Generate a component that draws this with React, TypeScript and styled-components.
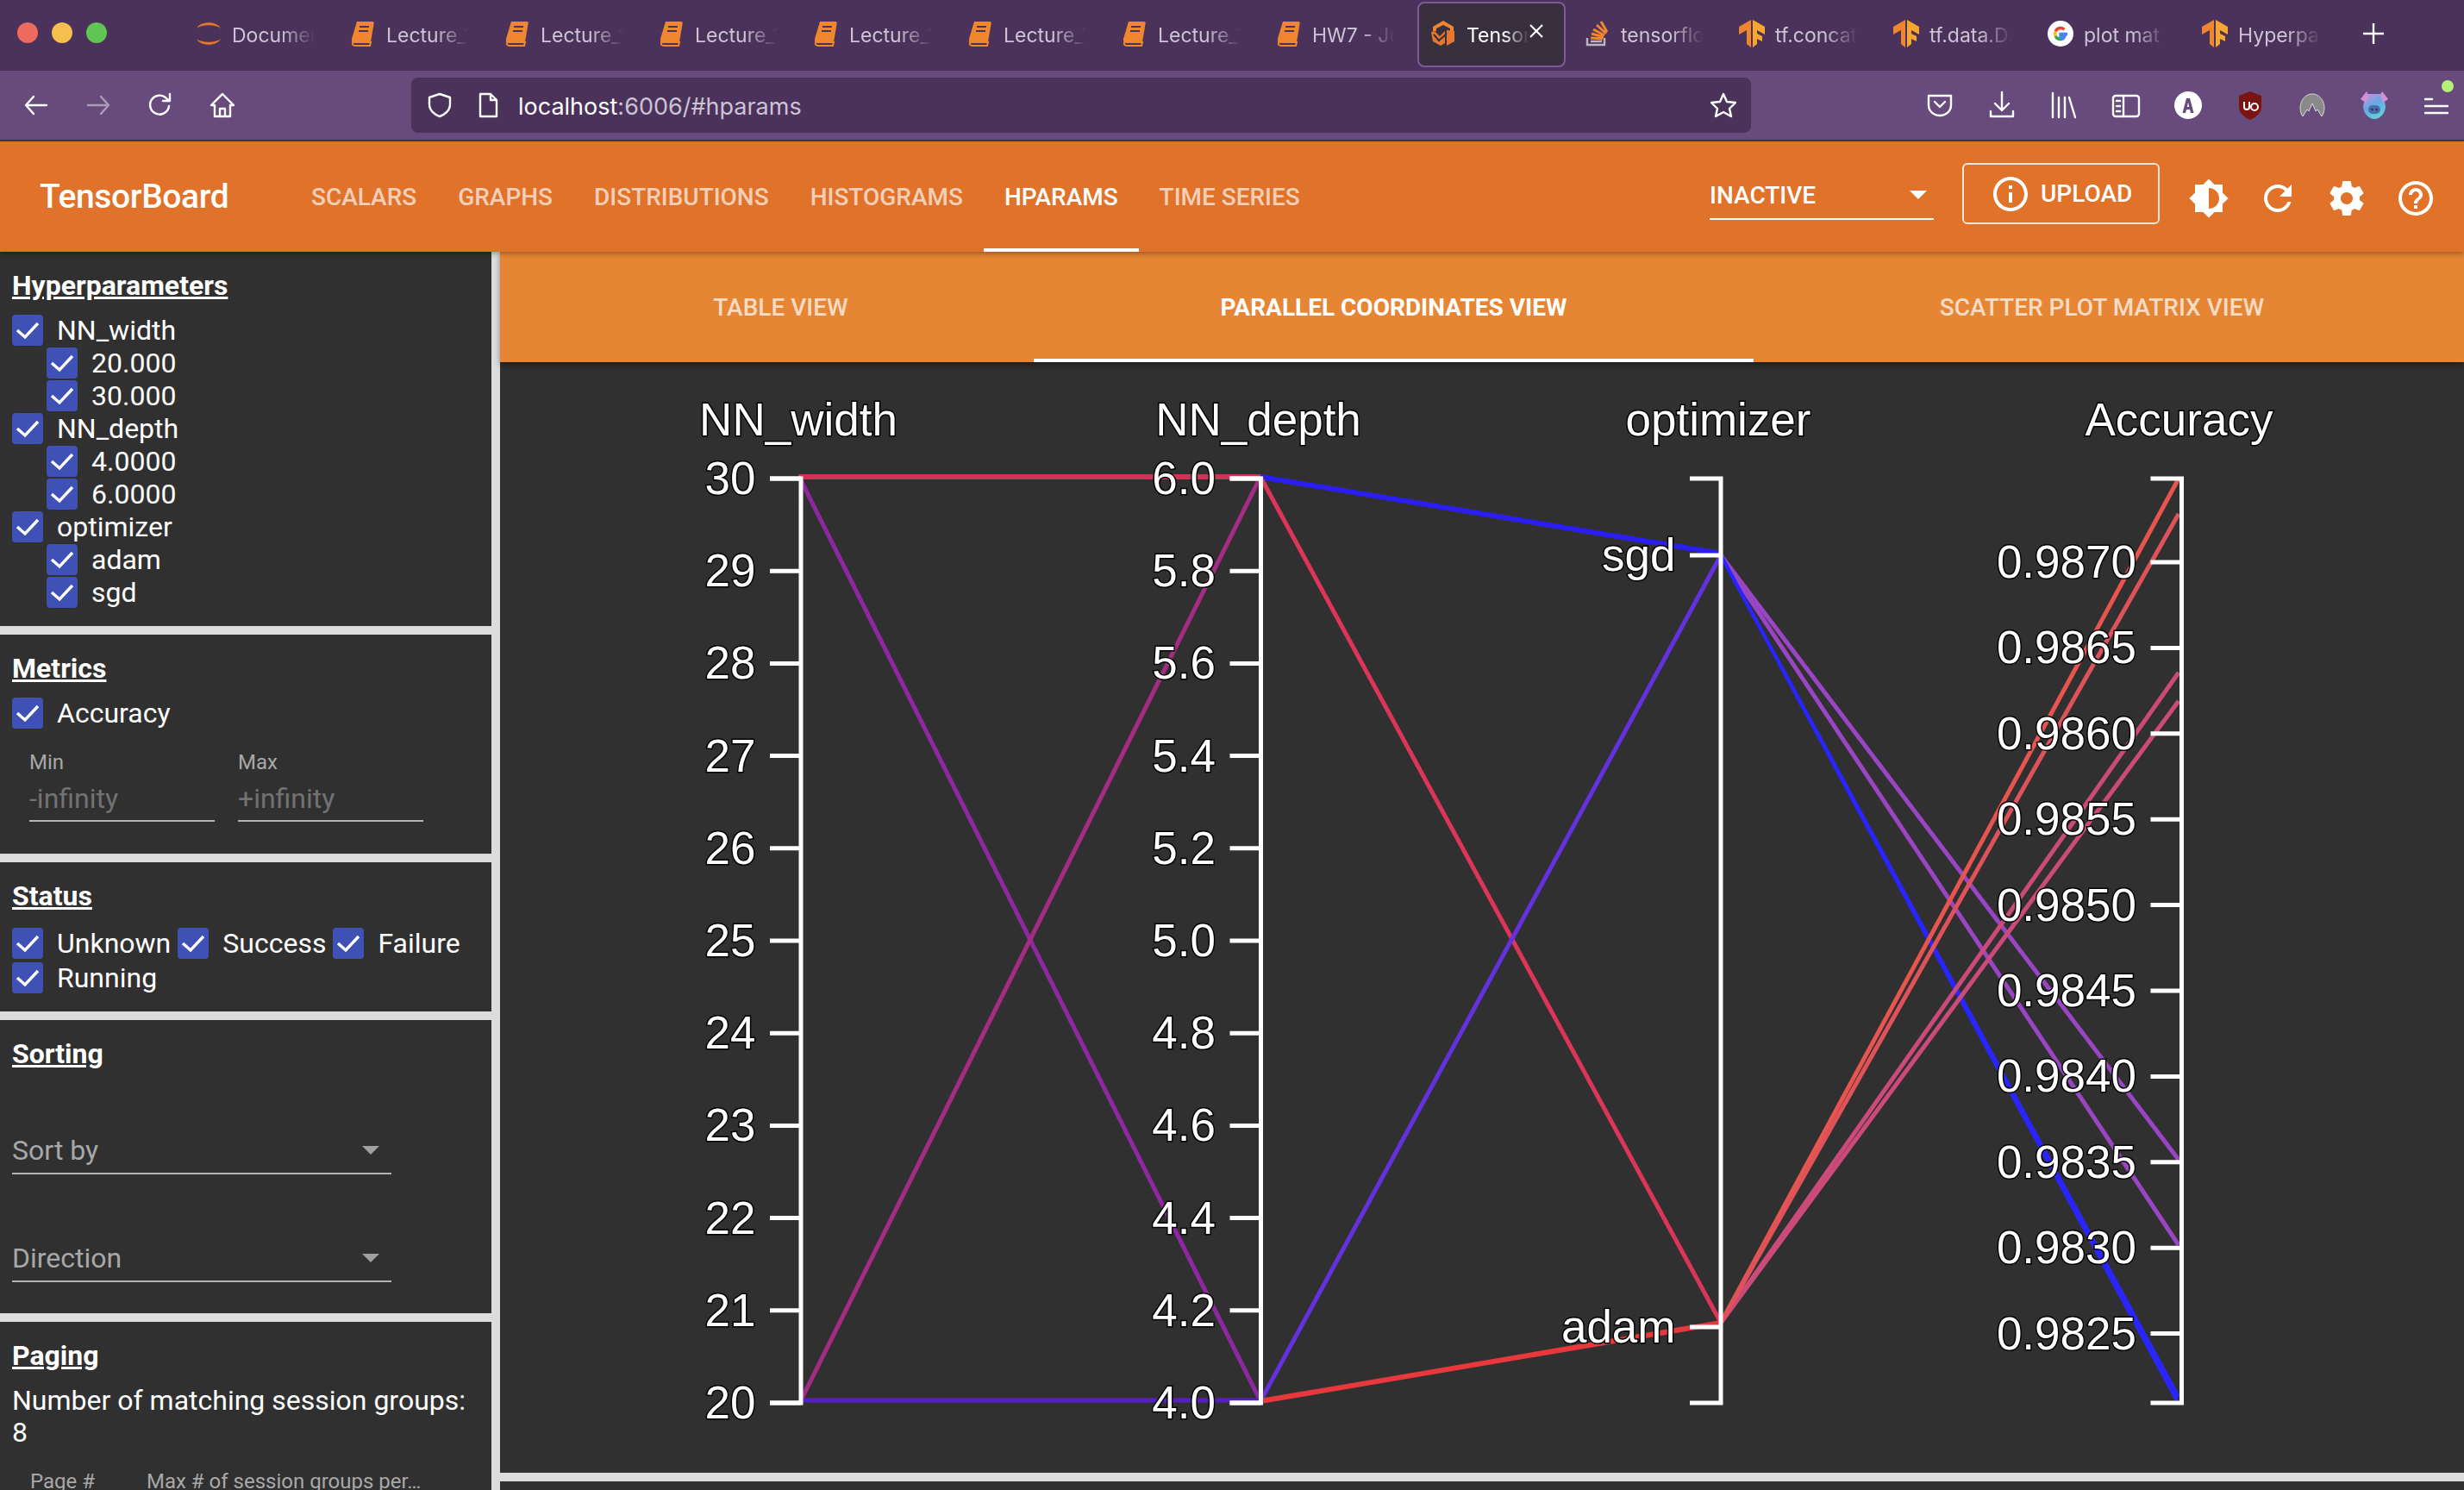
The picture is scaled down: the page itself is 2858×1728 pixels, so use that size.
import React from 'react';
import styled, { createGlobalStyle } from 'styled-components';

const GlobalStyle = createGlobalStyle`
  html, body { margin: 0; padding: 0; background: #303030; }
  * { box-sizing: border-box; }
`;

const Shell = styled.div`
  width: 2858px;
  height: 1728px;
  overflow: hidden;
  display: flex;
  flex-direction: column;
  font-family: Roboto, "Liberation Sans", sans-serif;
  color: #fff;
`;

/* browser chrome */
const TabBar = styled.div`
  height: 82px;
  flex: none;
  display: flex;
  align-items: center;
  background: #4a325a;
  font-family: Inter, "Liberation Sans", sans-serif;
`;
const Lights = styled.div`
  width: 222px;
  flex: none;
  display: flex;
  gap: 16px;
  padding-left: 20px;
  margin-top: -6px;
`;
const Light = styled.span<{ $c: string }>`
  width: 24px;
  height: 24px;
  border-radius: 50%;
  background: ${(p) => p.$c};
`;
const BrowserTab = styled.div<{ $active?: boolean }>`
  width: 179px;
  flex: none;
  height: 82px;
  position: relative;
  display: flex;
  align-items: center;
  padding-left: 5px;
  ${(p) =>
    p.$active &&
    `&::before {
      content: '';
      position: absolute;
      left: -10px;
      top: 2px;
      width: 168px;
      height: 72px;
      background: #38303f;
      border: 2px solid #7b5a9e;
      border-radius: 8px;
    }`}
`;
const TabIcon = styled.svg`
  width: 30px;
  height: 32px;
  flex: none;
  position: relative;
  margin-top: -4px;
`;
const TabLabel = styled.span<{ $active?: boolean; $w?: number }>`
  position: relative;
  margin-left: 12px;
  width: ${(p) => p.$w ?? 96}px;
  white-space: nowrap;
  font-size: 23px;
  line-height: 30px;
  color: ${(p) => (p.$active ? '#fff' : '#cdc3d6')};
  mask-image: linear-gradient(to right, #000 60%, transparent 100%);
`;
const CloseX = styled.svg`
  position: absolute;
  left: 118px;
  top: 26px;
  width: 20px;
  height: 20px;
`;
const PlusIcon = styled.svg`
  width: 26px;
  height: 26px;
  margin-left: 12px;
  margin-top: -4px;
`;

const Toolbar = styled.div`
  height: 82px;
  flex: none;
  display: flex;
  align-items: center;
  background: #674b7c;
  border-bottom: 2px solid #4a325a;
  padding-left: 6px;
`;
const ToolButton = styled.div<{ $dim?: boolean }>`
  width: 72px;
  height: 60px;
  flex: none;
  display: flex;
  align-items: center;
  justify-content: center;
  position: relative;
  opacity: ${(p) => (p.$dim ? 0.45 : 1)};
  svg { width: 34px; height: 34px; }
`;
const UrlBar = styled.div`
  width: 1554px;
  height: 64px;
  flex: none;
  margin-left: 183px;
  background: #4a325a;
  border-radius: 8px;
  display: flex;
  align-items: center;
  padding-left: 18px;
  font-family: Inter, "Liberation Sans", sans-serif;
  font-size: 27px;
  color: #cdc3d6;
  svg { width: 30px; height: 30px; flex: none; }
`;
const UrlText = styled.span`
  margin-left: 20px;
  padding-top: 2px;
  flex: 1;
  b { font-weight: 400; color: #fff; }
`;
const StarWrap = styled.span`
  display: flex;
  margin-right: 17px;
`;
const ToolGroup = styled.div`
  display: flex;
  margin-left: auto;
  margin-right: -4px;
`;
const Badge = styled.span`
  position: absolute;
  right: 16px;
  top: 1px;
  width: 14px;
  height: 14px;
  border-radius: 50%;
  background: #b5f07a;
`;

/* tensorboard header */
const Header = styled.header`
  height: 128px;
  flex: none;
  display: flex;
  align-items: center;
  background: #e0722a;
  padding-left: 46px;
  position: relative;
  z-index: 2;
  box-shadow: 0 2px 6px rgba(0, 0, 0, 0.35);
`;
const Brand = styled.div`
  width: 291px;
  flex: none;
  font-size: 39px;
  font-weight: 500;
  letter-spacing: -0.4px;
`;
const Nav = styled.nav`
  display: flex;
  height: 100%;
`;
const NavTab = styled.div<{ $active?: boolean }>`
  height: 100%;
  padding: 4px 24px 0;
  display: flex;
  align-items: center;
  font-size: 28px;
  font-weight: 500;
  letter-spacing: -0.02px;
  color: ${(p) => (p.$active ? '#fff' : 'rgba(255,255,255,0.68)')};
  border-bottom: 4px solid ${(p) => (p.$active ? '#fff' : 'transparent')};
`;
const RunSelect = styled.div`
  width: 260px;
  height: 58px;
  margin-left: auto;
  margin-top: -5px;
  display: flex;
  align-items: center;
  justify-content: space-between;
  padding: 3px 8px 0 0;
  border-bottom: 2px solid #fff;
  font-size: 28px;
  font-weight: 500;
`;
const Caret = styled.span<{ $c?: string; $w?: number }>`
  width: 0;
  height: 0;
  border-left: ${(p) => p.$w ?? 10}px solid transparent;
  border-right: ${(p) => p.$w ?? 10}px solid transparent;
  border-top: ${(p) => p.$w ?? 10}px solid ${(p) => p.$c ?? '#fff'};
`;
const UploadButton = styled.div`
  width: 229px;
  height: 71px;
  margin-left: 33px;
  margin-top: -7px;
  border: 2px solid #f4e6da;
  border-radius: 6px;
  display: flex;
  align-items: center;
  padding-left: 30px;
  gap: 11px;
  font-size: 28px;
  font-weight: 500;
  svg { width: 48px; height: 48px; fill: #fff; }
`;
const HeaderIcons = styled.div`
  display: flex;
  margin-left: 17px;
  margin-right: 16px;
  margin-top: 4px;
`;
const HeaderIcon = styled.svg`
  width: 80px;
  height: 48px;
  fill: #fff;
`;

const Body = styled.div`
  flex: 1;
  min-height: 0;
  display: flex;
`;

/* sidebar */
const Sidebar = styled.aside`
  width: 580px;
  flex: none;
  border-right: 10px solid #dcdcdc;
  display: flex;
  flex-direction: column;
  gap: 10px;
  background: #dcdcdc;
`;
const Section = styled.section<{ $h: number }>`
  flex: none;
  height: ${(p) => p.$h}px;
  background: #303030;
  padding: 20px 14px 0;
  overflow: hidden;
`;
const Heading = styled.h4`
  margin: 0 0 14px;
  font-size: 32px;
  line-height: 38px;
  font-weight: 700;
  text-decoration: underline;
`;
const Row = styled.div<{ $nested?: boolean }>`
  height: 38px;
  display: flex;
  align-items: center;
  padding-left: ${(p) => (p.$nested ? 40 : 0)}px;
`;
const Box = styled.span`
  width: 36px;
  height: 36px;
  flex: none;
  border-radius: 4px;
  background: #3f51b5;
  display: flex;
  align-items: center;
  justify-content: center;
  svg { width: 28px; height: 24px; }
`;
const CheckLabel = styled.span`
  margin-left: 16px;
  font-size: 32px;
  line-height: 38px;
  white-space: nowrap;
`;
const StatusWrap = styled.div`
  display: flex;
  flex-wrap: wrap;
  row-gap: 2px;
  padding-top: 3px;
`;
const StatusItem = styled.div`
  display: flex;
  align-items: center;
  height: 38px;
  margin-right: 8px;
`;
const MinMax = styled.div`
  display: flex;
  gap: 27px;
  padding-left: 20px;
  margin-top: 19px;
`;
const FieldCol = styled.div`
  width: 215px;
`;
const FieldLabel = styled.div`
  font-size: 24px;
  line-height: 38px;
  color: #a8a8a8;
`;
const FieldValue = styled.div`
  font-size: 32px;
  line-height: 46px;
  height: 50px;
  color: #727272;
  border-bottom: 2px solid #b4b4b4;
`;
const SelectField = styled.div<{ $first?: boolean }>`
  width: 440px;
  height: 56px;
  margin-top: ${(p) => (p.$first ? 65 : 69)}px;
  display: flex;
  align-items: center;
  justify-content: space-between;
  padding: 2px 14px 0 0;
  font-size: 32px;
  color: #a8a8a8;
  border-bottom: 2px solid #b4b4b4;
`;
const PagingText = styled.div`
  padding-top: 1px;
  font-size: 32px;
  line-height: 37px;
`;
const PagingCols = styled.div`
  display: flex;
  padding-left: 21px;
  margin-top: 19px;
  font-size: 24px;
  line-height: 38px;
  color: #a8a8a8;
  span:first-child { width: 135px; }
`;

/* main */
const Main = styled.main`
  flex: 1;
  min-width: 0;
  display: flex;
  flex-direction: column;
  background: #303030;
`;
const SubTabs = styled.div`
  height: 128px;
  flex: none;
  display: flex;
  background: #e68534;
  position: relative;
  box-shadow: 0 3px 6px rgba(0, 0, 0, 0.4);
`;
const SubTab = styled.div<{ $w: number; $active?: boolean; $pl?: number; $pr?: number }>`
  width: ${(p) => p.$w}px;
  flex: none;
  display: flex;
  align-items: center;
  justify-content: center;
  padding: 4px ${(p) => p.$pr ?? 0}px 0 ${(p) => p.$pl ?? 0}px;
  font-size: 28px;
  font-weight: ${(p) => (p.$active ? 700 : 500)};
  color: ${(p) => (p.$active ? '#fff' : 'rgba(255,255,255,0.72)')};
  border-bottom: 4px solid ${(p) => (p.$active ? '#fff' : 'transparent')};
`;
const Plot = styled.svg`
  width: 2278px;
  height: 1288px;
  flex: none;
  display: block;
`;
const PlotText = styled.text`
  font-family: "Liberation Sans", Arial, sans-serif;
  font-size: 53px;
  fill: #fff;
  stroke: #000;
  stroke-width: 3px;
  paint-order: stroke;
`;
const Divider = styled.div`
  height: 10px;
  flex: none;
  background: #dcdcdc;
`;

const Check = () => (
  <svg viewBox="0 0 28 24" fill="none" stroke="#fff" strokeWidth="3.4">
    <path d="M2 12l9 8L26 4" />
  </svg>
);

const CheckRow = ({ label, nested }: { label: string; nested?: boolean }) => (
  <Row $nested={nested}>
    <Box><Check /></Box>
    <CheckLabel>{label}</CheckLabel>
  </Row>
);

const BookIcon = () => (
  <TabIcon viewBox="0 0 30 32">
    <path d="M8 2h18c1.500 0 2 1 1.600 2.400L24 26H5c-2.500 0-3.600-1.600-3-4z" fill="#f0872f" />
    <path d="M3 26c-.8 2.600.5 4 3 4h17l1-4z" fill="none" stroke="#f0872f" strokeWidth="2" />
    <path d="M11 8h11M10 13h11" stroke="#4a325a" strokeWidth="2" />
  </TabIcon>
);
const RingIcon = () => (
  <TabIcon viewBox="0 0 30 32">
    <path d="M1 10C5 1 25 1 29 10C23 5 7 5 1 10z" fill="#e8762c" />
    <path d="M1 22C5 31 25 31 29 22C23 27 7 27 1 22z" fill="#e8762c" />
  </TabIcon>
);
const TfIcon = () => (
  <TabIcon viewBox="0 0 30 32">
    <path d="M14 0L0 8v9l9-5v16l5 4z" fill="#ee8630" />
    <path d="M16 0l14 8v9l-9-5v4l6 3v6l-6-3v6l-5 4z" fill="#f7a62f" />
  </TabIcon>
);
const StackIcon = () => (
  <TabIcon viewBox="0 0 30 32">
    <path d="M3 21v8h20v-8" fill="none" stroke="#bcb6c2" strokeWidth="2.400" />
    <path d="M7 25h13" stroke="#bcb6c2" strokeWidth="2.400" />
    <path d="M7 21l14 1M8 16l14 4M10 11l13 7M14 6l11 10M19 2l7 12" stroke="#f0872f" strokeWidth="3" fill="none" />
  </TabIcon>
);
const GoogleIcon = () => (
  <TabIcon viewBox="0 0 30 32">
    <circle cx="15" cy="16" r="15" fill="#fff" />
    <path d="M23 16.500h-8v3h4.600c-.8 2-2.500 3-4.600 3" fill="none" stroke="#4a85ef" strokeWidth="3.400" />
    <path d="M15 22.500c-2.600 0-4.800-1.500-5.800-3.800" fill="none" stroke="#34a853" strokeWidth="3.400" />
    <path d="M9.200 18.700a7 7 0 0 1 0-5.400" fill="none" stroke="#fbbc05" strokeWidth="3.400" />
    <path d="M9.200 13.300C10.200 11 12.400 9.500 15 9.500c1.700 0 3.200.6 4.400 1.700" fill="none" stroke="#ea4335" strokeWidth="3.400" />
  </TabIcon>
);
const BoardIcon = () => (
  <TabIcon viewBox="0 0 30 32">
    <path d="M15 1l12 7v5h-4V10l-8-4-8 4v3H3V8z" fill="#f0872f" />
    <path d="M1 14l4-1 6 6 6-6v14l-5 3-9-5zM19 12l9 1v12l-9 5z" fill="#e8762c" />
    <path d="M4 17l6 7 9-8" stroke="#38303f" strokeWidth="2" fill="none" />
  </TabIcon>
);

type TabDef = { icon: React.ReactNode; label: string; active?: boolean };
const lecture = (): TabDef => ({ icon: <BookIcon />, label: 'Lecture_1' });
const tabs: TabDef[] = [
  { icon: <RingIcon />, label: 'Documen' },
  lecture(), lecture(), lecture(), lecture(), lecture(), lecture(),
  { icon: <BookIcon />, label: 'HW7 - Ju' },
  { icon: <BoardIcon />, label: 'Tensor', active: true },
  { icon: <StackIcon />, label: 'tensorflo' },
  { icon: <TfIcon />, label: 'tf.concat' },
  { icon: <TfIcon />, label: 'tf.data.Da' },
  { icon: <GoogleIcon />, label: 'plot mat' },
  { icon: <TfIcon />, label: 'Hyperpa' },
];

const navItems = ['SCALARS', 'GRAPHS', 'DISTRIBUTIONS', 'HISTOGRAMS', 'HPARAMS', 'TIME SERIES'];

const line = { fill: 'none', stroke: '#fff', strokeWidth: 2.4, strokeLinecap: 'round', strokeLinejoin: 'round' } as const;

const ToolIcons = [
  <svg key="pocket" viewBox="0 0 34 34" {...line}><path d="M4 6h26v11c0 7-6 12-13 12S4 24 4 17z" /><path d="M11 13l6 6 6-6" /></svg>,
  <svg key="dl" viewBox="0 0 34 34" {...line}><path d="M17 2v21M9 15l8 8 8-8M4 24v6h26v-6" /></svg>,
  <svg key="lib" viewBox="0 0 34 34" {...line}><path d="M4 3v28M11 8v23M18 8v23M23 8l7 23" /></svg>,
  <svg key="side" viewBox="0 0 34 34" {...line}><rect x="2" y="6" width="30" height="24" rx="3" /><path d="M14 6v24M6 12h4M6 18h4M6 24h4" /></svg>,
  <svg key="a" viewBox="0 0 34 34"><circle cx="17" cy="17" r="16" fill="#fff" /><path d="M10.500 26L15 9h4l4.500 17h-3.500l-1-4h-4l-1 4zM15.800 19h2.400L17 13.500z" fill="#674b7c" /></svg>,
  <svg key="ub" viewBox="0 0 34 34"><path d="M17 1l13 5v13c0 7-6 12-13 15C10 31 4 26 4 19V6z" fill="#7b1410" /><path d="M10 13v6a3 3 0 0 0 6 0v-6M18 19a4 4 0 1 0 8 0 4 4 0 1 0-8 0" fill="none" stroke="#fff" strokeWidth="2" /></svg>,
  <svg key="nord" viewBox="0 0 34 34"><path d="M6 30C-1 20 5 4 17 4s18 16 11 26l-5-8-2 2-4-9-4 9-2-2z" fill="#8a8a8a" stroke="#d8d8d8" strokeWidth="1" /></svg>,
  <svg key="pig" viewBox="0 0 34 34">
    <defs>
      <linearGradient id="pigBody" x1="0" y1="0" x2="0.6" y2="1">
        <stop offset="0" stopColor="#d58fd8" />
        <stop offset="0.5" stopColor="#6aa6e8" />
        <stop offset="1" stopColor="#5fd0d8" />
      </linearGradient>
    </defs>
    <path d="M9 4h16l3 6 2 8c0 8-6 15-13 15S4 26 4 18l2-8z" fill="url(#pigBody)" />
    <path d="M8 1L1 10l6 4 3-9zM26 1l7 9-6 4-3-9z" fill="#d58fd8" />
    <rect x="10" y="17" width="14" height="10" rx="5" fill="#4a6fa8" />
    <circle cx="14.500" cy="22" r="1.500" fill="#2d3f66" />
    <circle cx="19.500" cy="22" r="1.500" fill="#2d3f66" />
  </svg>,
  <svg key="menu" viewBox="0 0 34 34" {...line}><path d="M4 10h8M4 18h26M4 26h26" /></svg>,
];

const Back = () => (<svg viewBox="0 0 34 34" {...line}><path d="M29 17H5M14 7L5 17l9 10" /></svg>);
const Forward = () => (<svg viewBox="0 0 34 34" {...line}><path d="M5 17h24M20 7l9 10-9 10" /></svg>);
const Reload = () => (<svg viewBox="0 0 34 34" {...line}><path d="M27 18a11 11 0 1 1-3-9l3 3M28 4v8h-8" /></svg>);
const Home = () => (<svg viewBox="0 0 34 34" {...line}><path d="M17 4L4 17h4v13h18V17h4zM14 30v-9h6v9" /></svg>);

/* chart data, in page coordinates */
const segments: [number, number, number, number, string, number][] = [
  [926, 553, 1462, 553, '#cf3358', 6],
  [929, 557, 1462, 1625, '#8f28a0', 5],
  [929, 1624, 1462, 553, '#a52c84', 5],
  [929, 1624, 1462, 1624, '#5a1ec8', 5],
  [1462, 553, 1996, 642, '#2a1ff0', 6],
  [1462, 553, 1996, 1534, '#dc3558', 5],
  [1462, 1625, 1996, 644, '#6430e0', 5],
  [1462, 1625, 1996, 1534, '#e8383c', 6],
  [1996, 644, 2527, 1345, '#9a45c4', 5],
  [1996, 644, 2527, 1444, '#9a45c4', 5],
  [1996, 644, 2527, 1628, '#2a25ff', 4],
  [1996, 644, 2527, 1620, '#2a25ff', 4],
  [1996, 1534, 2527, 780, '#cc4a7a', 5],
  [1996, 1534, 2527, 813, '#cc4a7a', 5],
  [1996, 1534, 2527, 555, '#e8544e', 5],
  [1996, 1534, 2527, 596, '#e0525a', 5],
];

type AxisDef = { x: number; title: string; ticks: [string, number][] };
const linear = (labels: string[]): [string, number][] =>
  labels.map((l, i) => [l, 555 + i * 107.2]);
const axes: AxisDef[] = [
  { x: 929, title: 'NN_width', ticks: linear(['30', '29', '28', '27', '26', '25', '24', '23', '22', '21', '20']) },
  { x: 1462.5, title: 'NN_depth', ticks: linear(['6.0', '5.8', '5.6', '5.4', '5.2', '5.0', '4.8', '4.6', '4.4', '4.2', '4.0']) },
  { x: 1996, title: 'optimizer', ticks: [['sgd', 644], ['adam', 1539]] },
  {
    x: 2530.5,
    title: 'Accuracy',
    ticks: ['0.9870', '0.9865', '0.9860', '0.9855', '0.9850', '0.9845', '0.9840', '0.9835', '0.9830', '0.9825'].map(
      (l, i) => [l, 652 + i * 99.4] as [string, number],
    ),
  },
];

const Chart = () => (
  <Plot viewBox="580 420 2278 1288">
    {segments.map(([x1, y1, x2, y2, c, w], i) => (
      <line key={i} x1={x1} y1={y1} x2={x2} y2={y2} stroke={c} strokeWidth={w} />
    ))}
    {axes.map((a) => (
      <g key={a.title}>
        <path d={`M${a.x - 36} 555H${a.x}V1627H${a.x - 36}`} fill="none" stroke="#fff" strokeWidth="5" />
        {a.ticks.map(([l, y]) => (
          <g key={l}>
            <line x1={a.x - 36} x2={a.x} y1={y} y2={y} stroke="#fff" strokeWidth="5" />
            <PlotText x={a.x - 52.5} y={y + 18} textAnchor="end">{l}</PlotText>
          </g>
        ))}
        <PlotText x={a.x - 3} y={505} textAnchor="middle">{a.title}</PlotText>
      </g>
    ))}
  </Plot>
);

export default function App() {
  return (
    <Shell>
      <GlobalStyle />
      <TabBar>
        <Lights>
          <Light $c="#ec6a5e" />
          <Light $c="#f4bf4f" />
          <Light $c="#61c554" />
        </Lights>
        {tabs.map((t, i) => (
          <BrowserTab key={i} $active={t.active}>
            {t.icon}
            <TabLabel $active={t.active} $w={t.active ? 72 : undefined}>{t.label}</TabLabel>
            {t.active && (
              <CloseX viewBox="0 0 20 20" stroke="#fff" strokeWidth="2"><path d="M3 3l14 14M17 3L3 17" /></CloseX>
            )}
          </BrowserTab>
        ))}
        <PlusIcon viewBox="0 0 26 26" stroke="#fff" strokeWidth="2.400"><path d="M13 1v24M1 13h24" /></PlusIcon>
      </TabBar>

      <Toolbar>
        <ToolButton><Back /></ToolButton>
        <ToolButton $dim><Forward /></ToolButton>
        <ToolButton><Reload /></ToolButton>
        <ToolButton><Home /></ToolButton>
        <UrlBar>
          <svg viewBox="0 0 30 30" {...line}><path d="M15 2l12 4v8c0 7-6 12-12 14C9 26 3 21 3 14V6z" /></svg>
          <svg viewBox="0 0 30 30" {...line} style={{ marginLeft: 26 }}><path d="M6 2h12l7 7v19H6zM18 2v7h7" /></svg>
          <UrlText><b>localhost</b>:6006/#hparams</UrlText>
          <StarWrap>
            <svg viewBox="0 0 30 30" {...line}><path d="M15 2l4 9 10 1-7 7 2 9-9-5-9 5 2-9-7-7 10-1z" /></svg>
          </StarWrap>
        </UrlBar>
        <ToolGroup>
          {ToolIcons.map((icon, i) => (
            <ToolButton key={i}>
              {icon}
              {i === ToolIcons.length - 1 && <Badge />}
            </ToolButton>
          ))}
        </ToolGroup>
      </Toolbar>

      <Header>
        <Brand>TensorBoard</Brand>
        <Nav>
          {navItems.map((n) => (
            <NavTab key={n} $active={n === 'HPARAMS'}>{n}</NavTab>
          ))}
        </Nav>
        <RunSelect>INACTIVE<Caret /></RunSelect>
        <UploadButton>
          <svg viewBox="0 0 24 24"><path d="M11 7h2v2h-2zm0 4h2v6h-2zm1-9C6.480 2 2 6.480 2 12s4.480 10 10 10 10-4.480 10-10S17.520 2 12 2zm0 18c-4.410 0-8-3.590-8-8s3.590-8 8-8 8 3.590 8 8-3.590 8-8 8z" /></svg>
          UPLOAD
        </UploadButton>
        <HeaderIcons>
          <HeaderIcon viewBox="-8 0 40 24"><path fillRule="evenodd" d="M20 15.310L23.310 12 20 8.690V4h-4.690L12 .69 8.690 4H4v4.690L.69 12 4 15.310V20h4.690L12 23.310 15.310 20H20v-4.690zM12 18V6c3.310 0 6 2.690 6 6s-2.690 6-6 6z" /></HeaderIcon>
          <HeaderIcon viewBox="-8 0 40 24"><path d="M17.650 6.350C16.200 4.900 14.210 4 12 4c-4.420 0-7.990 3.580-7.990 8s3.570 8 7.990 8c3.730 0 6.840-2.550 7.730-6h-2.080c-.82 2.330-3.040 4-5.650 4-3.310 0-6-2.690-6-6s2.690-6 6-6c1.660 0 3.140.69 4.220 1.780L13 11h7V4l-2.350 2.350z" /></HeaderIcon>
          <HeaderIcon viewBox="-8 0 40 24"><path d="M19.430 12.980c.04-.32.07-.64.07-.98s-.03-.66-.07-.98l2.110-1.650c.19-.15.24-.42.12-.64l-2-3.460c-.12-.22-.39-.3-.61-.22l-2.490 1c-.52-.4-1.080-.73-1.690-.98l-.38-2.650C14.460 2.180 14.250 2 14 2h-4c-.25 0-.46.18-.49.42l-.38 2.650c-.61.25-1.170.59-1.690.98l-2.490-1c-.23-.09-.49 0-.61.22l-2 3.460c-.13.22-.07.49.12.64l2.110 1.650c-.04.32-.07.65-.07.98s.03.66.07.98l-2.110 1.650c-.19.15-.24.42-.12.64l2 3.460c.12.22.39.3.61.22l2.490-1c.52.4 1.080.73 1.690.98l.38 2.650c.03.24.24.42.49.42h4c.25 0 .46-.18.49-.42l.38-2.650c.61-.25 1.170-.59 1.690-.98l2.490 1c.23.09.49 0 .61-.22l2-3.460c.12-.22.07-.49-.12-.64l-2.110-1.650zM12 15.500c-1.930 0-3.500-1.570-3.500-3.500s1.570-3.500 3.500-3.500 3.500 1.570 3.500 3.500-1.570 3.500-3.500 3.500z" /></HeaderIcon>
          <HeaderIcon viewBox="-8 0 40 24"><path d="M11 18h2v-2h-2v2zm1-16C6.480 2 2 6.480 2 12s4.480 10 10 10 10-4.480 10-10S17.520 2 12 2zm0 18c-4.410 0-8-3.590-8-8s3.590-8 8-8 8 3.590 8 8-3.590 8-8 8zm0-14c-2.210 0-4 1.790-4 4h2c0-1.100.9-2 2-2s2 .9 2 2c0 2-3 1.750-3 5h2c0-2.250 3-2.500 3-5 0-2.210-1.790-4-4-4z" /></HeaderIcon>
        </HeaderIcons>
      </Header>

      <Body>
        <Sidebar>
          <Section $h={434}>
            <Heading>Hyperparameters</Heading>
            <CheckRow label="NN_width" />
            <CheckRow nested label="20.000" />
            <CheckRow nested label="30.000" />
            <CheckRow label="NN_depth" />
            <CheckRow nested label="4.0000" />
            <CheckRow nested label="6.0000" />
            <CheckRow label="optimizer" />
            <CheckRow nested label="adam" />
            <CheckRow nested label="sgd" />
          </Section>
          <Section $h={254}>
            <Heading>Metrics</Heading>
            <CheckRow label="Accuracy" />
            <MinMax>
              <FieldCol>
                <FieldLabel>Min</FieldLabel>
                <FieldValue>-infinity</FieldValue>
              </FieldCol>
              <FieldCol>
                <FieldLabel>Max</FieldLabel>
                <FieldValue>+infinity</FieldValue>
              </FieldCol>
            </MinMax>
          </Section>
          <Section $h={173}>
            <Heading>Status</Heading>
            <StatusWrap>
              {['Unknown', 'Success', 'Failure', 'Running'].map((s) => (
                <StatusItem key={s}>
                  <Box><Check /></Box>
                  <CheckLabel>{s}</CheckLabel>
                </StatusItem>
              ))}
            </StatusWrap>
          </Section>
          <Section $h={340}>
            <Heading>Sorting</Heading>
            <SelectField $first>Sort by<Caret $c="#a0a0a0" /></SelectField>
            <SelectField>Direction<Caret $c="#a0a0a0" /></SelectField>
          </Section>
          <Section $h={300}>
            <Heading>Paging</Heading>
            <PagingText>Number of matching session groups: 8</PagingText>
            <PagingCols>
              <span>Page #</span>
              <span>Max # of session groups per…</span>
            </PagingCols>
          </Section>
        </Sidebar>
        <Main>
          <SubTabs>
            <SubTab $w={619} $pl={32}>TABLE VIEW</SubTab>
            <SubTab $w={835} $active>PARALLEL COORDINATES VIEW</SubTab>
            <SubTab $w={824} $pr={16}>SCATTER PLOT MATRIX VIEW</SubTab>
          </SubTabs>
          <Chart />
          <Divider />
        </Main>
      </Body>
    </Shell>
  );
}
